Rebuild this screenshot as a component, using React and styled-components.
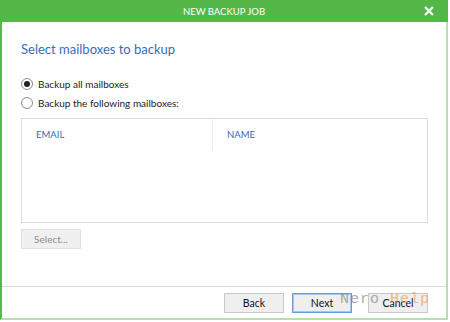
import React from "react";
import styled, { createGlobalStyle } from "styled-components";

const Global = createGlobalStyle`
  html, body { margin: 0; padding: 0; background: #ffffff; }
  body { font-family: Lato, "Open Sans", sans-serif; }
`;

const Page = styled.div`
  width: 450px;
  height: 322px;
  background: #ffffff;
  position: relative;
  overflow: hidden;
`;

const Frame = styled.div`
  width: 448px;
  height: 320px;
  box-sizing: border-box;
  border-left: 2px solid #55b94b;
  border-right: 2px solid #b4dfae;
  border-bottom: 2px solid #b4dfae;
  display: flex;
  flex-direction: column;
  background: #ffffff;
`;

const TitleBar = styled.div`
  height: 22px;
  background: #53b848;
  margin-left: -2px;
  margin-right: -2px;
  display: flex;
  align-items: center;
  justify-content: center;
  position: relative;
  color: #ffffff;
  font-size: 9.5px;
`;

const Close = styled.span`
  position: absolute;
  right: 13px;
  top: 5px;
  width: 12px;
  height: 12px;
  display: flex;
`;

const Body = styled.div`
  flex: 1;
  padding: 17px 18px 0 19px;
  display: flex;
  flex-direction: column;
`;

const Heading = styled.div`
  color: #3b6cb3;
  font-size: 13px;
  line-height: 20px;
`;

const RadioGroup = styled.div`
  margin-top: 17px;
  display: flex;
  flex-direction: column;
  gap: 3px;
`;

const RadioRow = styled.label`
  display: flex;
  align-items: center;
  gap: 5px;
  height: 16px;
  font-size: 10px;
  color: #222;
`;

const RadioCircle = styled.span`
  width: 12px;
  height: 12px;
  box-sizing: border-box;
  border: 1px solid #8a8a8a;
  border-radius: 50%;
  display: flex;
  align-items: center;
  justify-content: center;
  background: #fff;
  &::after {
    content: "";
    width: 6px;
    height: 6px;
    border-radius: 50%;
    background: ${(p) => (p.checked ? "#222" : "transparent")};
  }
`;

const Table = styled.div`
  margin-top: 7px;
  height: 103px;
  border: 1px solid #dcdcdc;
  display: grid;
  grid-template-columns: 191px 1fr;
  grid-template-rows: 31px 1fr;
`;

const HeaderCell = styled.div`
  color: #3b6cb3;
  font-size: 9.5px;
  padding-left: 14px;
  display: flex;
  align-items: center;
  border-right: ${(p) => (p.divider ? "1px solid #ececec" : "none")};
`;

const SelectButton = styled.button`
  margin-top: 6px;
  width: 60px;
  height: 20px;
  background: #f0f0f0;
  border: 1px solid #e1e1e1;
  color: #8c8c8c;
  font-family: inherit;
  font-size: 10px;
  padding: 0;
`;

const Footer = styled.div`
  margin-top: auto;
  border-top: 1px solid #d9d9d9;
  height: 32px;
  display: flex;
  justify-content: flex-end;
  align-items: flex-start;
  padding: 6px 18px 0 0;
  gap: 8px;
  box-sizing: border-box;
`;

const Button = styled.button`
  width: 60px;
  height: 20px;
  background: #efefef;
  border: 1px solid ${(p) => (p.primary ? "#6f9ad8" : "#c9c9c9")};
  box-shadow: ${(p) => (p.primary ? "inset 0 0 0 1px #a9c4ec" : "none")};
  color: #111;
  font-family: inherit;
  font-size: 10.5px;
  padding: 0;
  margin-left: ${(p) => p.gapLeft || 0}px;
`;

const Watermark = styled.div`
  position: absolute;
  left: 340px;
  top: 291px;
  display: flex;
  align-items: center;
  font-family: "Liberation Mono", monospace;
  font-size: 15px;
  letter-spacing: 1px;
  pointer-events: none;
  opacity: 0.7;
`;

const WmGray = styled.span`
  color: #8a8a8a;
`;

const WmOrange = styled.span`
  color: #f0a060;
`;

export default function App() {
  return (
    <Page>
      <Global />
      <Frame>
        <TitleBar>
          NEW BACKUP JOB
          <Close>
            <svg width="12" height="12" viewBox="0 0 12 12">
              <path d="M2 2 L10 10 M10 2 L2 10" stroke="#fff" strokeWidth="2.2" />
            </svg>
          </Close>
        </TitleBar>
        <Body>
          <Heading>Select mailboxes to backup</Heading>
          <RadioGroup>
            <RadioRow>
              <RadioCircle checked />
              Backup all mailboxes
            </RadioRow>
            <RadioRow>
              <RadioCircle />
              Backup the following mailboxes:
            </RadioRow>
          </RadioGroup>
          <Table>
            <HeaderCell divider>EMAIL</HeaderCell>
            <HeaderCell>NAME</HeaderCell>
          </Table>
          <div>
            <SelectButton>Select...</SelectButton>
          </div>
        </Body>
        <Footer>
          <Button>Back</Button>
          <Button primary>Next</Button>
          <Button gapLeft={8}>Cancel</Button>
        </Footer>
      </Frame>
      <Watermark>
        <WmGray>Nero</WmGray>
        <WmOrange>&nbsp;Help</WmOrange>
      </Watermark>
    </Page>
  );
}
